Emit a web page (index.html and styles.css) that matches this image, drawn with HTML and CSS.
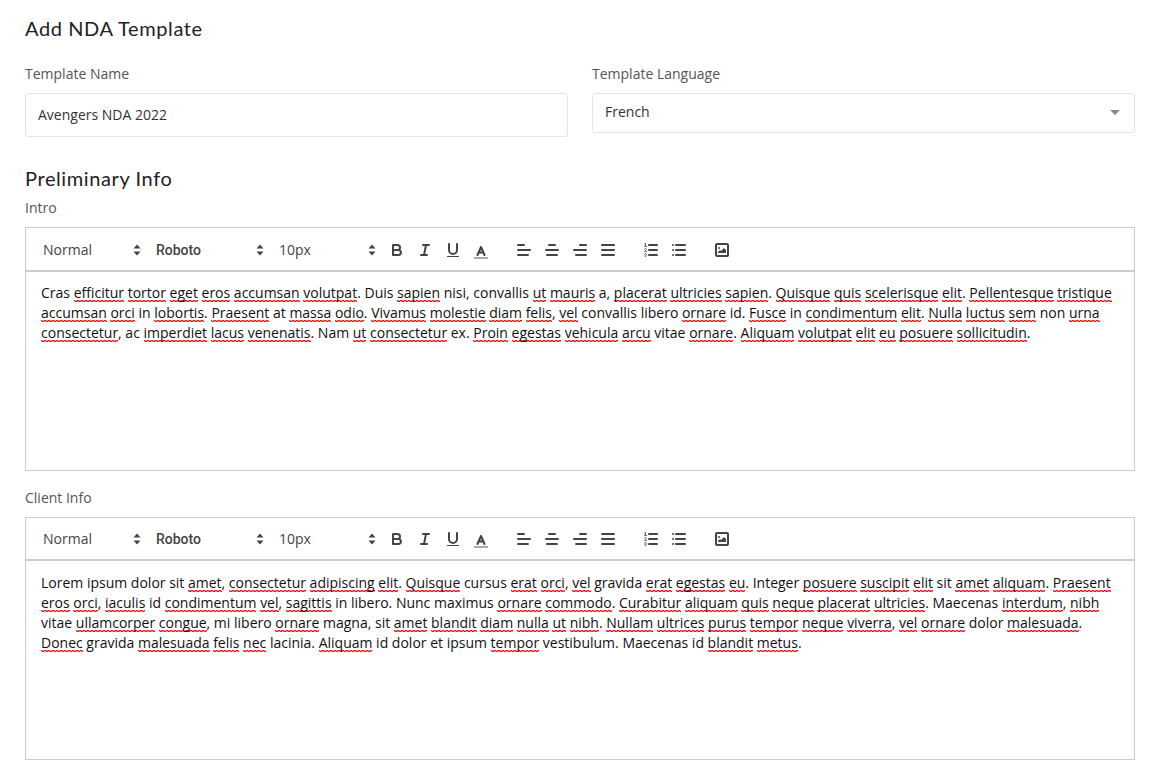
FILE: index.html
```html
<!DOCTYPE html>
<html>
<head>
  <link rel="stylesheet" href="styles.css">
</head>
<body>
  <svg class="defs" width="0" height="0">
    <symbol id="i-updown" viewBox="0 0 8 12"><path d="M4 0.5 7.5 4.5H0.5Z M4 11.5 0.5 7.5H7.5Z"/></symbol>
    <symbol id="i-bold" viewBox="0 0 18 18"><path class="st" d="M5,4H9.5A2.5,2.5,0,0,1,12,6.5v0A2.5,2.5,0,0,1,9.5,9H5V4Z"/><path class="st" d="M5,9h5.5A2.5,2.5,0,0,1,13,11.5v0A2.5,2.5,0,0,1,10.5,14H5V9Z"/></symbol>
    <symbol id="i-italic" viewBox="0 0 18 18"><path class="st" d="M7 4H13M5 14H11M8 14 10 4"/></symbol>
    <symbol id="i-underline" viewBox="0 0 18 18"><path class="st" d="M5,3V9a4,4,0,0,0,4,4h0a4,4,0,0,0,4-4V3"/><rect class="fl" x="3" y="15" width="12" height="1" rx=".5"/></symbol>
    <symbol id="i-color" viewBox="0 0 18 18"><path class="lb" d="M3 17H15"/><path class="st" d="M5.5 14 9 6 12.5 14M11.2 11.5H6.8"/></symbol>
    <symbol id="i-left" viewBox="0 0 18 18"><path class="st" d="M3 9H15M3 14H13M3 4H9"/></symbol>
    <symbol id="i-center" viewBox="0 0 18 18"><path class="st" d="M15 9H3M14 14H4M12 4H6"/></symbol>
    <symbol id="i-right" viewBox="0 0 18 18"><path class="st" d="M15 9H3M15 14H5M15 4H9"/></symbol>
    <symbol id="i-justify" viewBox="0 0 18 18"><path class="st" d="M15 9H3M15 14H3M15 4H3"/></symbol>
    <symbol id="i-ordered" viewBox="0 0 18 18"><path class="st" d="M7 4H15M7 9H15M7 14H15"/><path class="th" d="M2.5 5.5H4.5M3.5 5.5V2.5L2.5 3M4.5 10.5h-2c0-.234,1.85-1.076,1.85-2.234A0.959,0.959,0,0,0,2.5,8.156M2.5,14.846a0.959,0.959,0,0,0,1.85-.109A0.7,0.7,0,0,0,3.75,14a0.688,0.688,0,0,0,.6-0.736,0.959,0.959,0,0,0-1.85-.109"/></symbol>
    <symbol id="i-bullet" viewBox="0 0 18 18"><path class="st" d="M6 4H15M6 9H15M6 14H15M3 4H3M3 9H3M3 14H3"/></symbol>
    <symbol id="i-image" viewBox="0 0 18 18"><rect class="st" x="3" y="3" width="12" height="12" rx="1"/><circle class="fl" cx="6" cy="7" r="1"/><path class="fl" d="M5 12V11L7 9 8 10 11 7 13 9V12Z"/></symbol>
  </svg>

  <div class="page">
    <h2 class="title">Add NDA Template</h2>

    <div class="fields">
      <div class="field">
        <label class="field-label">Template Name</label>
        <div class="input">Avengers NDA 2022</div>
      </div>
      <div class="field">
        <label class="field-label">Template Language</label>
        <div class="select">
          French
          <span class="select-arrow"></span>
        </div>
      </div>
    </div>

    <h2 class="section-title">Preliminary Info</h2>

    <label class="editor-label">Intro</label>
    <div class="editor">
      <div class="toolbar">
        <div class="picker picker-header"><span class="picker-label">Normal</span><svg class="updown"><use href="#i-updown"/></svg></div>
        <div class="picker picker-font"><span>Roboto</span><svg class="updown"><use href="#i-updown"/></svg></div>
        <div class="picker picker-size"><span class="picker-label">10px</span><svg class="updown"><use href="#i-updown"/></svg></div>
        <div class="tool-group">
          <svg class="tool"><use href="#i-bold"/></svg>
          <svg class="tool"><use href="#i-italic"/></svg>
          <svg class="tool"><use href="#i-underline"/></svg>
          <svg class="tool"><use href="#i-color"/></svg>
        </div>
        <div class="tool-group">
          <svg class="tool"><use href="#i-left"/></svg>
          <svg class="tool"><use href="#i-center"/></svg>
          <svg class="tool"><use href="#i-right"/></svg>
          <svg class="tool"><use href="#i-justify"/></svg>
        </div>
        <div class="tool-group">
          <svg class="tool"><use href="#i-ordered"/></svg>
          <svg class="tool"><use href="#i-bullet"/></svg>
        </div>
        <div class="tool-group">
          <svg class="tool"><use href="#i-image"/></svg>
        </div>
      </div>
      <div class="content">Cras <u>efficitur</u> <u>tortor</u> <u>eget</u> <u>eros</u> <u>accumsan</u> <u>volutpat</u>. Duis <u>sapien</u> nisi, convallis <u>ut</u> <u>mauris</u> a, <u>placerat</u> <u>ultricies</u> <u>sapien</u>. <u>Quisque</u> <u>quis</u> <u>scelerisque</u> <u>elit</u>. <u>Pellentesque</u> <u>tristique</u> <u>accumsan</u> <u>orci</u> in <u>lobortis</u>. <u>Praesent</u> at <u>massa</u> <u>odio</u>. <u>Vivamus</u> <u>molestie</u> <u>diam</u> <u>felis</u>, <u>vel</u> convallis libero <u>ornare</u> id. <u>Fusce</u> in <u>condimentum</u> <u>elit</u>. <u>Nulla</u> <u>luctus</u> <u>sem</u> non <u>urna</u> <u>consectetur</u>, ac <u>imperdiet</u> <u>lacus</u> <u>venenatis</u>. Nam <u>ut</u> <u>consectetur</u> ex. <u>Proin</u> <u>egestas</u> <u>vehicula</u> <u>arcu</u> vitae <u>ornare</u>. <u>Aliquam</u> <u>volutpat</u> <u>elit</u> <u>eu</u> <u>posuere</u> <u>sollicitudin</u>.</div>
    </div>

    <label class="editor-label editor-label-next">Client Info</label>
    <div class="editor editor-next">
      <div class="toolbar">
        <div class="picker picker-header"><span class="picker-label">Normal</span><svg class="updown"><use href="#i-updown"/></svg></div>
        <div class="picker picker-font"><span>Roboto</span><svg class="updown"><use href="#i-updown"/></svg></div>
        <div class="picker picker-size"><span class="picker-label">10px</span><svg class="updown"><use href="#i-updown"/></svg></div>
        <div class="tool-group">
          <svg class="tool"><use href="#i-bold"/></svg>
          <svg class="tool"><use href="#i-italic"/></svg>
          <svg class="tool"><use href="#i-underline"/></svg>
          <svg class="tool"><use href="#i-color"/></svg>
        </div>
        <div class="tool-group">
          <svg class="tool"><use href="#i-left"/></svg>
          <svg class="tool"><use href="#i-center"/></svg>
          <svg class="tool"><use href="#i-right"/></svg>
          <svg class="tool"><use href="#i-justify"/></svg>
        </div>
        <div class="tool-group">
          <svg class="tool"><use href="#i-ordered"/></svg>
          <svg class="tool"><use href="#i-bullet"/></svg>
        </div>
        <div class="tool-group">
          <svg class="tool"><use href="#i-image"/></svg>
        </div>
      </div>
      <div class="content">Lorem ipsum dolor sit <u>amet</u>, <u>consectetur</u> <u>adipiscing</u> <u>elit</u>. <u>Quisque</u> cursus <u>erat</u> <u>orci</u>, <u>vel</u> gravida <u>erat</u> <u>egestas</u> <u>eu</u>. Integer <u>posuere</u> <u>suscipit</u> <u>elit</u> sit <u>amet</u> <u>aliquam</u>. <u>Praesent</u> <u>eros</u> <u>orci</u>, <u>iaculis</u> id <u>condimentum</u> <u>vel</u>, <u>sagittis</u> in libero. Nunc maximus <u>ornare</u> <u>commodo</u>. <u>Curabitur</u> <u>aliquam</u> <u>quis</u> <u>neque</u> <u>placerat</u> <u>ultricies</u>. Maecenas <u>interdum</u>, <u>nibh</u> vitae <u>ullamcorper</u> <u>congue</u>, mi libero <u>ornare</u> magna, sit <u>amet</u> <u>blandit</u> <u>diam</u> <u>nulla</u> <u>ut</u> <u>nibh</u>. <u>Nullam</u> <u>ultrices</u> <u>purus</u> <u>tempor</u> <u>neque</u> <u>viverra</u>, <u>vel</u> <u>ornare</u> dolor <u>malesuada</u>. <u>Donec</u> gravida <u>malesuada</u> <u>felis</u> <u>nec</u> lacinia. <u>Aliquam</u> id dolor et ipsum <u>tempor</u> vestibulum. Maecenas id <u>blandit</u> <u>metus</u>.</div>
    </div>
  </div>
</body>
</html>
```
FILE: styles.css
```css
body {
  margin: 0;
  padding: 0;
  background-color: #fff;
  color: #333;
  font-family: "Open Sans", sans-serif;
  font-size: 14px;
}

.defs {
  position: absolute;
}

.page {
  padding: 16px 25px 0;
  height: 754px;
  overflow: hidden;
}

.title,
.section-title {
  margin: 0;
  font-family: Lato, sans-serif;
  font-size: 20px;
  font-weight: 400;
  line-height: 24px;
  letter-spacing: 0.6px;
  color: #222;
}

.fields {
  display: grid;
  grid-template-columns: 1fr 1fr;
  gap: 24px;
  margin-top: 24px;
}

.field-label {
  display: block;
  height: 19px;
  line-height: 19px;
  color: #555;
  margin-bottom: 10px;
}

.input,
.select {
  box-sizing: border-box;
  border: 1px solid #e4e4e4;
  border-radius: 3px;
  padding: 0 12px;
  color: #333;
}

.input {
  height: 44px;
  line-height: 42px;
}

.select {
  display: flex;
  align-items: center;
  justify-content: space-between;
  height: 40px;
  padding-bottom: 4px;
}

.select-arrow {
  border-left: 5px solid transparent;
  border-right: 5px solid transparent;
  border-top: 5px solid #888;
  margin-right: 2px;
  margin-top: 3px;
}

.section-title {
  margin-top: 29px;
}

.editor-label {
  display: block;
  height: 19px;
  line-height: 19px;
  margin-top: 8px;
  margin-bottom: 10px;
  color: #555;
}

.editor-label-next {
  margin-top: 17px;
}

.editor {
  box-sizing: border-box;
  border: 1px solid #ccc;
  height: 244px;
}

.toolbar {
  box-sizing: border-box;
  display: flex;
  align-items: center;
  height: 44px;
  padding: 2px 8px 0 9px;
  border-bottom: 2px solid #ccc;
  color: #444;
}

.editor-next {
  height: 243px;
}

.editor-next .toolbar {
  height: 43px;
  padding-top: 0;
}

.editor-next .picker-label {
  margin-bottom: 0;
}

.editor-next .content {
  padding-top: 12px;
}

.picker {
  display: flex;
  align-items: center;
  justify-content: space-between;
  box-sizing: border-box;
  padding: 0 7px 0 8px;
  height: 24px;
}

.picker-label {
  margin-bottom: 2px;
}

.picker-header {
  width: 113px;
}

.picker-font {
  width: 123px;
  font-family: Roboto, sans-serif;
  font-weight: 500;
}

.picker-size {
  width: 112px;
}

.updown {
  width: 8px;
  height: 12px;
  fill: #444;
}

.tool-group {
  display: flex;
  margin-right: 15px;
}

.tool {
  width: 18px;
  height: 18px;
  padding: 3px 5px;
  stroke-linecap: round;
  stroke-linejoin: round;
}

.st {
  fill: none;
  stroke: #444;
  stroke-width: 2;
}

.th {
  fill: none;
  stroke: #666;
  stroke-width: 1;
}

.fl {
  fill: #444;
}

.lb {
  fill: none;
  stroke: #aaa;
  stroke-width: 2;
  stroke-linecap: square;
}

.content {
  padding: 11px 15px 12px;
  line-height: 20px;
  color: #111;
}

.content u {
  text-decoration: none;
  background: url("data:image/svg+xml,%3Csvg xmlns='http://www.w3.org/2000/svg' width='4' height='2'%3E%3Cpath d='M0 0 2 2 4 0' fill='none' stroke='%23f01010' stroke-width='1.3'/%3E%3C/svg%3E") repeat-x 0 100%;
}
```
